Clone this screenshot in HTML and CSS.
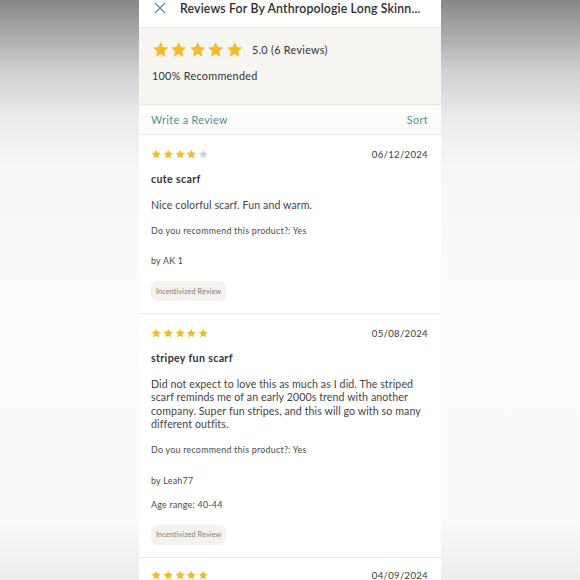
FILE: index.html
```html
<!DOCTYPE html>
<html lang="en">
<head>
<meta charset="utf-8">
<link rel="stylesheet" href="styles.css">
</head>
<body>
<svg width="0" height="0" class="defs">
  <defs>
    <symbol id="star" viewBox="0 0 24 24"><polygon points="12,1.5 15.1,8.2 22.5,9.1 17,14.2 18.5,21.6 12,17.9 5.5,21.6 7,14.2 1.5,9.1 8.9,8.2"/></symbol>
  </defs>
</svg>
<div class="phone">
  <header class="topbar">
    <svg class="close" viewBox="0 0 12 12"><path d="M1 1 L11 11 M11 1 L1 11"/></svg>
    <h1 class="title">Reviews For By Anthropologie Long Skinn...</h1>
  </header>
  <section class="summary">
    <div class="summary-rating">
      <div class="stars big">
        <svg><use href="#star"/></svg><svg><use href="#star"/></svg><svg><use href="#star"/></svg><svg><use href="#star"/></svg><svg><use href="#star"/></svg>
      </div>
      <span class="score">5.0 (6 Reviews)</span>
    </div>
    <div class="recommended">100% Recommended</div>
  </section>
  <nav class="actions">
    <span class="link">Write a Review</span>
    <span class="link">Sort</span>
  </nav>
  <article class="review">
    <div class="review-head">
      <div class="stars small">
        <svg><use href="#star"/></svg><svg><use href="#star"/></svg><svg><use href="#star"/></svg><svg><use href="#star"/></svg><svg class="off"><use href="#star"/></svg>
      </div>
      <span class="date">06/12/2024</span>
    </div>
    <h2 class="review-title">cute scarf</h2>
    <p class="body">Nice colorful scarf. Fun and warm.</p>
    <p class="meta rec">Do you recommend this product?: Yes</p>
    <p class="meta by">by AK 1</p>
    <span class="badge">Incentivized Review</span>
  </article>
  <article class="review">
    <div class="review-head">
      <div class="stars small">
        <svg><use href="#star"/></svg><svg><use href="#star"/></svg><svg><use href="#star"/></svg><svg><use href="#star"/></svg><svg><use href="#star"/></svg>
      </div>
      <span class="date">05/08/2024</span>
    </div>
    <h2 class="review-title">stripey fun scarf</h2>
    <p class="body">Did not expect to love this as much as I did. The striped scarf reminds me of an early 2000s trend with another company. Super fun stripes, and this will go with so many different outfits.</p>
    <p class="meta rec">Do you recommend this product?: Yes</p>
    <p class="meta by">by Leah77</p>
    <p class="meta age">Age range: 40-44</p>
    <span class="badge">Incentivized Review</span>
  </article>
  <article class="review last">
    <div class="review-head">
      <div class="stars small">
        <svg><use href="#star"/></svg><svg><use href="#star"/></svg><svg><use href="#star"/></svg><svg><use href="#star"/></svg><svg><use href="#star"/></svg>
      </div>
      <span class="date">04/09/2024</span>
    </div>
  </article>
</div>
</body>
</html>
```
FILE: styles.css
```css
* { box-sizing: border-box; margin: 0; padding: 0; }
html, body { height: 580px; overflow: hidden; }
body {
  font-family: Lato, "Open Sans", sans-serif;
  background: linear-gradient(to bottom, #878787 0px, #a6a6a6 30px, #cfcfcf 70px, #ececec 120px, #f7f7f7 170px, #fbfbfb 300px, #fafafa 520px, #ececec 580px);
  display: flex;
  justify-content: center;
  color: #333;
}
.defs { position: absolute; }
.phone {
  width: 302px;
  height: 580px;
  background: #fff;
  overflow: hidden;
  display: flex;
  flex-direction: column;
  flex-shrink: 0;
}
.topbar {
  height: 28px;
  display: flex;
  align-items: center;
  padding: 0 0 0 15px;
  border-bottom: 1px solid #ebe9e5;
  background: #fff;
  flex-shrink: 0;
}
.close {
  width: 12px;
  height: 12px;
  fill: none;
  stroke: #4f8e9b;
  stroke-width: 1.1;
  margin-top: -12px;
}
.title {
  margin-left: 14px;
  margin-top: -11px;
  font-size: 12.3px;
  font-weight: 600;
  color: #2e2e2e;
  letter-spacing: 0.15px;
  white-space: nowrap;
}
.summary {
  background: #f6f5f2;
  height: 77px;
  padding: 13px 0 0 13px;
  border-bottom: 1px solid #e9e7e2;
  flex-shrink: 0;
}
.summary-rating {
  display: flex;
  align-items: center;
  height: 17px;
}
.stars { display: flex; fill: #f2bb2c; }
.stars.big { gap: 1px; }
.stars.big svg { width: 17.4px; height: 17.4px; }
.stars.small { gap: 1.3px; }
.stars.small svg { width: 10.5px; height: 10.5px; }
.stars svg.off { fill: #d4d4d8; }
.score {
  margin-left: 9px;
  font-size: 10.8px;
  color: #333;
  letter-spacing: 0.3px;
}
.recommended {
  margin-top: 11px;
  font-size: 10.8px;
  color: #333;
  letter-spacing: 0.3px;
}
.actions {
  height: 30px;
  background: #fcfcfa;
  border-bottom: 1px solid #ebe9e5;
  display: flex;
  justify-content: space-between;
  align-items: center;
  padding: 0 13px 0 12px;
  flex-shrink: 0;
}
.link {
  font-size: 10.8px;
  color: #4f8e9b;
  letter-spacing: 0.35px;
}
.review {
  padding: 13px 13px 12px 12px;
  border-bottom: 1px solid #ebe9e5;
  display: flex;
  flex-direction: column;
  align-items: flex-start;
  flex-shrink: 0;
}
.review.last { padding-top: 12px; border-bottom: none; }
.review-head {
  width: 100%;
  height: 12px;
  display: flex;
  justify-content: space-between;
  align-items: center;
}
.date {
  font-size: 9.6px;
  color: #3a3a3a;
  letter-spacing: 0.3px;
}
.review-title {
  margin-top: 12px;
  font-size: 10.6px;
  line-height: 14px;
  font-weight: 700;
  color: #333;
  letter-spacing: 0.35px;
}
.body {
  margin-top: 12.5px;
  font-size: 10.6px;
  line-height: 13.5px;
  color: #444;
  letter-spacing: 0.1px;
}
.meta {
  font-size: 8.9px;
  line-height: 12px;
  color: #4a4a4a;
  letter-spacing: 0.25px;
}
.rec { margin-top: 12.5px; }
.by { margin-top: 18.5px; }
.age { margin-top: 12px; }
.badge {
  margin-top: 14px;
  height: 20px;
  padding: 0 5px;
  display: flex;
  align-items: center;
  background: #f3f2ee;
  border-radius: 6px;
  font-size: 7.2px;
  color: #7a7a7a;
  letter-spacing: 0.15px;
}
```
